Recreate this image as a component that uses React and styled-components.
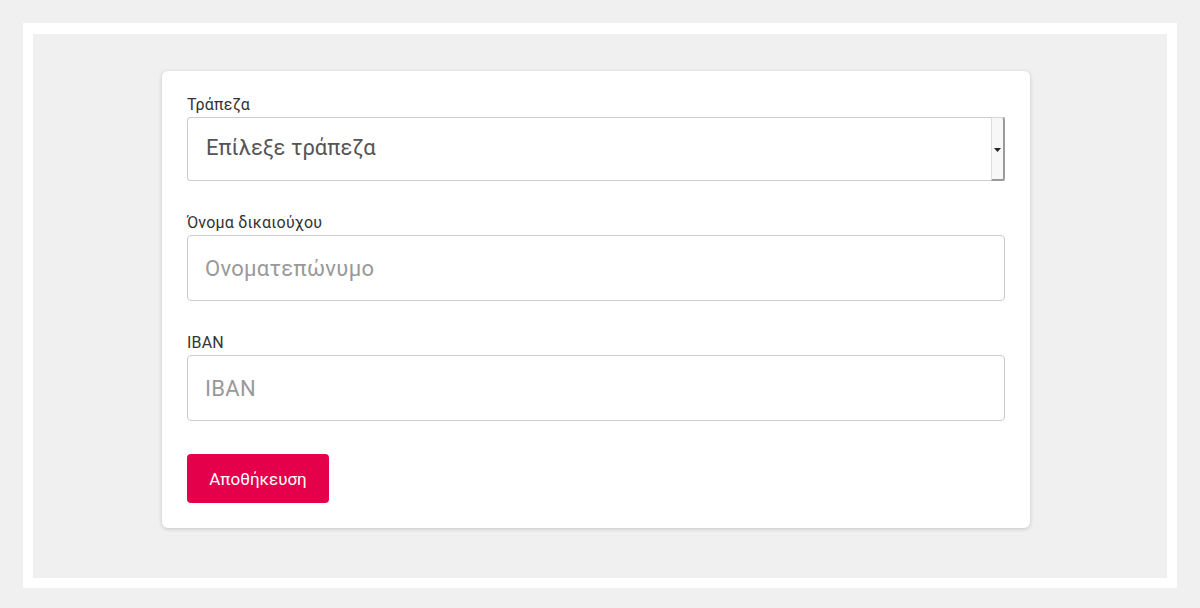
import React, { useState } from "react";
import styled, { createGlobalStyle } from "styled-components";

const GlobalStyle = createGlobalStyle`
  html, body {
    margin: 0;
    padding: 0;
    background: #f0f0f0;
    font-family: Roboto, "Noto Sans", "Liberation Sans", sans-serif;
  }
`;

// outer white frame
const Page = styled.div`
  padding: 23px;
  height: 608px;
  box-sizing: border-box;
`;

const Frame = styled.div`
  background: #ffffff;
  padding: 11px 10px 10px 10px;
  height: 565px;
  box-sizing: border-box;
`;

const Inner = styled.div`
  background: #f0f0f0;
  height: 100%;
  box-sizing: border-box;
  padding: 37px 0 0 129px;
`;

// form card
const Card = styled.form`
  width: 868px;
  box-sizing: border-box;
  background: #ffffff;
  border-radius: 6px;
  box-shadow: 0 1px 4px rgba(0, 0, 0, 0.18);
  padding: 24px 25px 25px 25px;
  display: flex;
  flex-direction: column;
`;

const Field = styled.div`
  display: flex;
  flex-direction: column;
  gap: 2px;
  margin-bottom: ${(p) => (p.$last ? "33px" : "32px")};
`;

const Label = styled.label`
  font-size: 16px;
  line-height: 20px;
  color: #333333;
  letter-spacing: 0.2px;
`;

const SelectBox = styled.div`
  display: flex;
  height: 64px;
  box-sizing: border-box;
  border: 1px solid #cccccc;
  border-right: none;
  border-radius: 4px 0 0 4px;
  background: #ffffff;
`;

const Select = styled.select`
  flex: 1;
  appearance: none;
  border: none;
  outline: none;
  background: transparent;
  font-family: inherit;
  font-size: 22px;
  color: #555555;
  padding: 0 18px 4px 18px;
`;

// the little native-looking arrow strip
const ArrowStrip = styled.div`
  width: 11px;
  margin-top: -1px;
  margin-bottom: -1px;
  background: #f7f7f7;
  border-left: 1px solid #dddddd;
  border-top: 1px solid #d6d6d6;
  border-right: 2px solid #9a9a9a;
  border-bottom: 2px solid #9a9a9a;
  border-radius: 0 3px 3px 0;
  display: flex;
  align-items: center;
  justify-content: center;
  padding-top: 2px;
  svg {
    display: block;
  }
`;

const Input = styled.input`
  height: 66px;
  box-sizing: border-box;
  border: 1px solid #cccccc;
  border-radius: 4px;
  font-family: inherit;
  font-size: 22px;
  color: #555555;
  padding: 0 17px;
  outline: none;
  letter-spacing: 0.3px;
  &::placeholder {
    color: #999999;
  }
`;

const Button = styled.button`
  align-self: flex-start;
  width: 142px;
  height: 49px;
  border: none;
  border-radius: 4px;
  background: #e4004b;
  color: #ffffff;
  font-family: inherit;
  font-size: 17px;
  cursor: pointer;
`;

export default function App() {
  const [form, setForm] = useState({ bank: "", name: "", iban: "" });

  const onChange = (e) => setForm({ ...form, [e.target.name]: e.target.value });

  return (
    <>
      <GlobalStyle />
      <Page>
        <Frame>
          <Inner>
            <Card onSubmit={(e) => e.preventDefault()}>
              <Field>
                <Label>Τράπεζα</Label>
                <SelectBox>
                  <Select name="bank" value={form.bank} onChange={onChange}>
                    <option value="">Επίλεξε τράπεζα</option>
                  </Select>
                  <ArrowStrip>
                    <svg width="7" height="4" viewBox="0 0 7 4">
                      <path d="M0 0 L7 0 L3.5 4 Z" fill="#222" />
                    </svg>
                  </ArrowStrip>
                </SelectBox>
              </Field>
              <Field>
                <Label>Όνομα δικαιούχου</Label>
                <Input name="name" placeholder="Ονοματεπώνυμο" value={form.name} onChange={onChange} />
              </Field>
              <Field $last>
                <Label>IBAN</Label>
                <Input name="iban" placeholder="IBAN" value={form.iban} onChange={onChange} />
              </Field>
              <Button type="submit">Αποθήκευση</Button>
            </Card>
          </Inner>
        </Frame>
      </Page>
    </>
  );
}
